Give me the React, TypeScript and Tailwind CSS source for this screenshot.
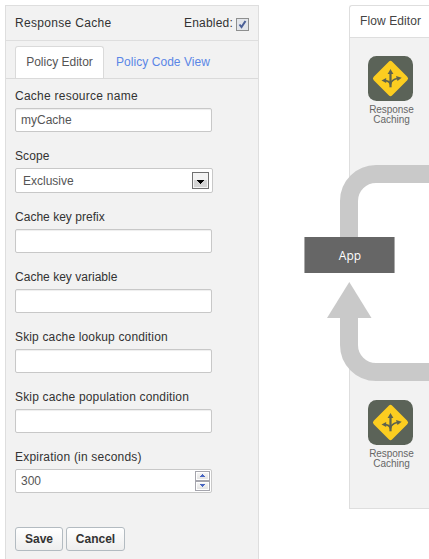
import React from "react";

const inputBox =
  "block h-[24px] w-[197px] rounded-[2px] border border-[#c8c8c8] bg-white px-[5px] text-[12px] text-[#555] shadow-[inset_0_1px_1px_rgba(0,0,0,0.07)] outline-none";

const buttonBox =
  "h-[24px] rounded-[3px] border border-[#b3bbc1] bg-linear-to-b from-white to-[#eee] font-bold text-[#333]";

function Field({ label, labelClass, children }: { label: string; labelClass: string; children?: React.ReactNode }) {
  return (
    <div className="flex h-[60px] flex-col">
      <label className={"block h-[20px] whitespace-nowrap leading-[16px] " + labelClass}>{label}</label>
      {children ?? <input className={inputBox} />}
    </div>
  );
}

function PolicyIcon() {
  return (
    <svg width="45" height="45" viewBox="0 0 45 45" className="block">
      <rect width="45" height="45" rx="8.5" fill="#5b6358" />
      <rect x="9.400" y="9.400" width="26.200" height="26.200" rx="2.500" fill="#fccd20" transform="rotate(45 22.500 22.500)" />
      <g fill="none" stroke="#5d624e" strokeWidth="1.800">
        <path d="M22.500 31.300V17" strokeWidth="2.200" />
        <path d="M22.500 28.500c-.5-2.800-2.500-3.700-5.500-3.900" />
        <path d="M22.500 28c.5-3 3-4.500 6.500-5.500" />
      </g>
      <g fill="#5d624e">
        <path d="M22.500 13l2.900 5h-5.800z" />
        <path d="M13.500 24.500l4.700-2.600v5.200z" />
        <path d="M33.700 21.700l-5.700-1.700 1.500 5z" />
      </g>
    </svg>
  );
}

function Policy() {
  return (
    <div className="flex w-[81px] flex-col items-center text-center text-[10px] leading-[10px] text-[#666]">
      <PolicyIcon />
      <div className="ml-[2px] mt-[4px] -tracking-[0.05px]">Response<br />Caching</div>
    </div>
  );
}

function Spinner() {
  return (
    <div className="flex h-[20px] w-[15px] flex-col border border-[#a5a5ad] bg-[#a5a5ad]">
      {["M4 5h5v-1h-1v-1h-1v-1h-1v1h-1v1h-1z", "M4 2h5v1h-1v1h-1v1h-1v-1h-1v-1h-1z"].map((d, i) => (
        <div key={i} className={"h-[8px] w-[13px] shrink-0 border border-white bg-linear-to-b from-[#f5f5f5] to-[#e4e4e4]" + (i ? " mt-[2px]" : "")}>
          <svg className="-ml-px -mt-px block" width="13" height="8" shapeRendering="crispEdges"><path d={d} fill="#4966c2" /></svg>
        </div>
      ))}
    </div>
  );
}

export default function App() {
  return (
    <div className="relative flex h-[559px] w-[429px] overflow-hidden bg-white pl-[5px] pt-[5px] font-['Liberation_Sans',Arial,sans-serif] text-[12px] text-[#333]">
      <section className="h-[554px] w-[254px] shrink-0 border border-b-0 border-[#dedede] bg-[#f2f2f2]">
        <header className="flex h-[35px] items-center justify-between border-b border-[#dedede] pl-[9px] pr-[9px]">
          <span className="tracking-[0.32px]">Response Cache</span>
          <label className="flex items-center gap-[3px]">
            <span className="tracking-[0.2px]">Enabled:</span>
            <span className="mt-[3px] flex h-[13px] w-[13px] items-center justify-center border border-[#8e8f8f] bg-[#e2e5ea]">
              <svg width="9" height="9" viewBox="0 0 9 9"><path d="M1.500 4.500L3.500 7L7.500 1" fill="none" stroke="#4a5f97" strokeWidth="2" /></svg>
            </span>
          </label>
        </header>
        <nav className="flex h-[38px] items-end border-b border-[#dadada] pl-[9px]">
          <span className="flex h-[32px] w-[89px] items-center justify-center rounded-t-[3px] border border-b-0 border-[#dadada] bg-white pb-[1px] text-[#555]">Policy Editor</span>
          <span className="flex h-[32px] items-center pb-[1px] pl-[12px] tracking-[0.05px] text-[#5a86e6]">Policy Code View</span>
        </nav>
        <form className="pl-[9px] pt-[9px]" onSubmit={(e) => e.preventDefault()}>
          <Field label="Cache resource name" labelClass="tracking-[0.25px]">
            <input className={inputBox} defaultValue="myCache" />
          </Field>
          <div className="h-[61px]">
            <Field label="Scope" labelClass="tracking-[0.1px]">
              <div className="flex h-[25px] w-[198px] items-center justify-between rounded-[2px] border border-[#c8c8c8] bg-white pl-[7px] pr-[3px] text-[#555]">
                <span>Exclusive</span>
                <span className="flex h-[17px] w-[17px] items-center justify-center border border-[#707070] bg-linear-to-b from-[#f3f3f3] from-50% to-[#d4d4d4] to-50% shadow-[inset_0_0_0_1px_#f4f4f4]">
                  <svg width="7" height="4" className="mt-[3px]" shapeRendering="crispEdges"><path d="M0 0h7v1H6v1H5v1H4v1H3V3H2V2H1V1H0z" /></svg>
                </span>
              </div>
            </Field>
          </div>
          <Field label="Cache key prefix" labelClass="tracking-[0.02px]" />
          <Field label="Cache key variable" labelClass="tracking-[0.02px]" />
          <Field label="Skip cache lookup condition" labelClass="tracking-[0.15px]" />
          <Field label="Skip cache population condition" labelClass="tracking-[0.17px]" />
          <Field label="Expiration (in seconds)" labelClass="tracking-[0.2px]">
            <div className="flex h-[24px] w-[197px] items-center justify-between rounded-[2px] border border-[#c8c8c8] bg-white pl-[5px] pr-px text-[#555]">
              <span>300</span>
              <Spinner />
            </div>
          </Field>
          <div className="flex gap-[3px] pt-[18px]">
            <button className={buttonBox + " w-[48px]"}>Save</button>
            <button className={buttonBox + " w-[59px]"}>Cancel</button>
          </div>
        </form>
      </section>
      <section className="ml-[90px] flex h-[504px] w-[80px] flex-col">
        <header className="flex h-[33px] shrink-0 items-center rounded-tl-[3px] border-b border-l border-t border-[#dedede] pb-[2px] pl-[10px] tracking-[0.1px] text-[#444]">Flow Editor</header>
        <div className="h-[140px] shrink-0 border-l border-[#dedede] bg-[#f2f2f2] pt-[18px]"><Policy /></div>
        <div className="h-[190px] shrink-0" />
        <div className="flex-1 border-b border-l border-[#dedede] bg-[#f2f2f2] pt-[32px]"><Policy /></div>
      </section>
      <svg className="absolute left-0 top-0" width="429" height="559">
        <path d="M349 240V201A27 27 0 0 1 376 174H429" fill="none" stroke="#c9c9c9" strokeWidth="18" />
        <path d="M349 315V345A27 27 0 0 0 376 372H429" fill="none" stroke="#c9c9c9" strokeWidth="18" />
        <path d="M349.300 282L371.500 318H327z" fill="#c9c9c9" />
      </svg>
      <div className="absolute left-[304px] top-[237px] flex h-[36px] w-[91px] items-center justify-center border-x border-[#aaa] bg-[#666] pl-[1px] pt-[1px] font-['Open_Sans',sans-serif] text-[12px] text-white">App</div>
    </div>
  );
}
